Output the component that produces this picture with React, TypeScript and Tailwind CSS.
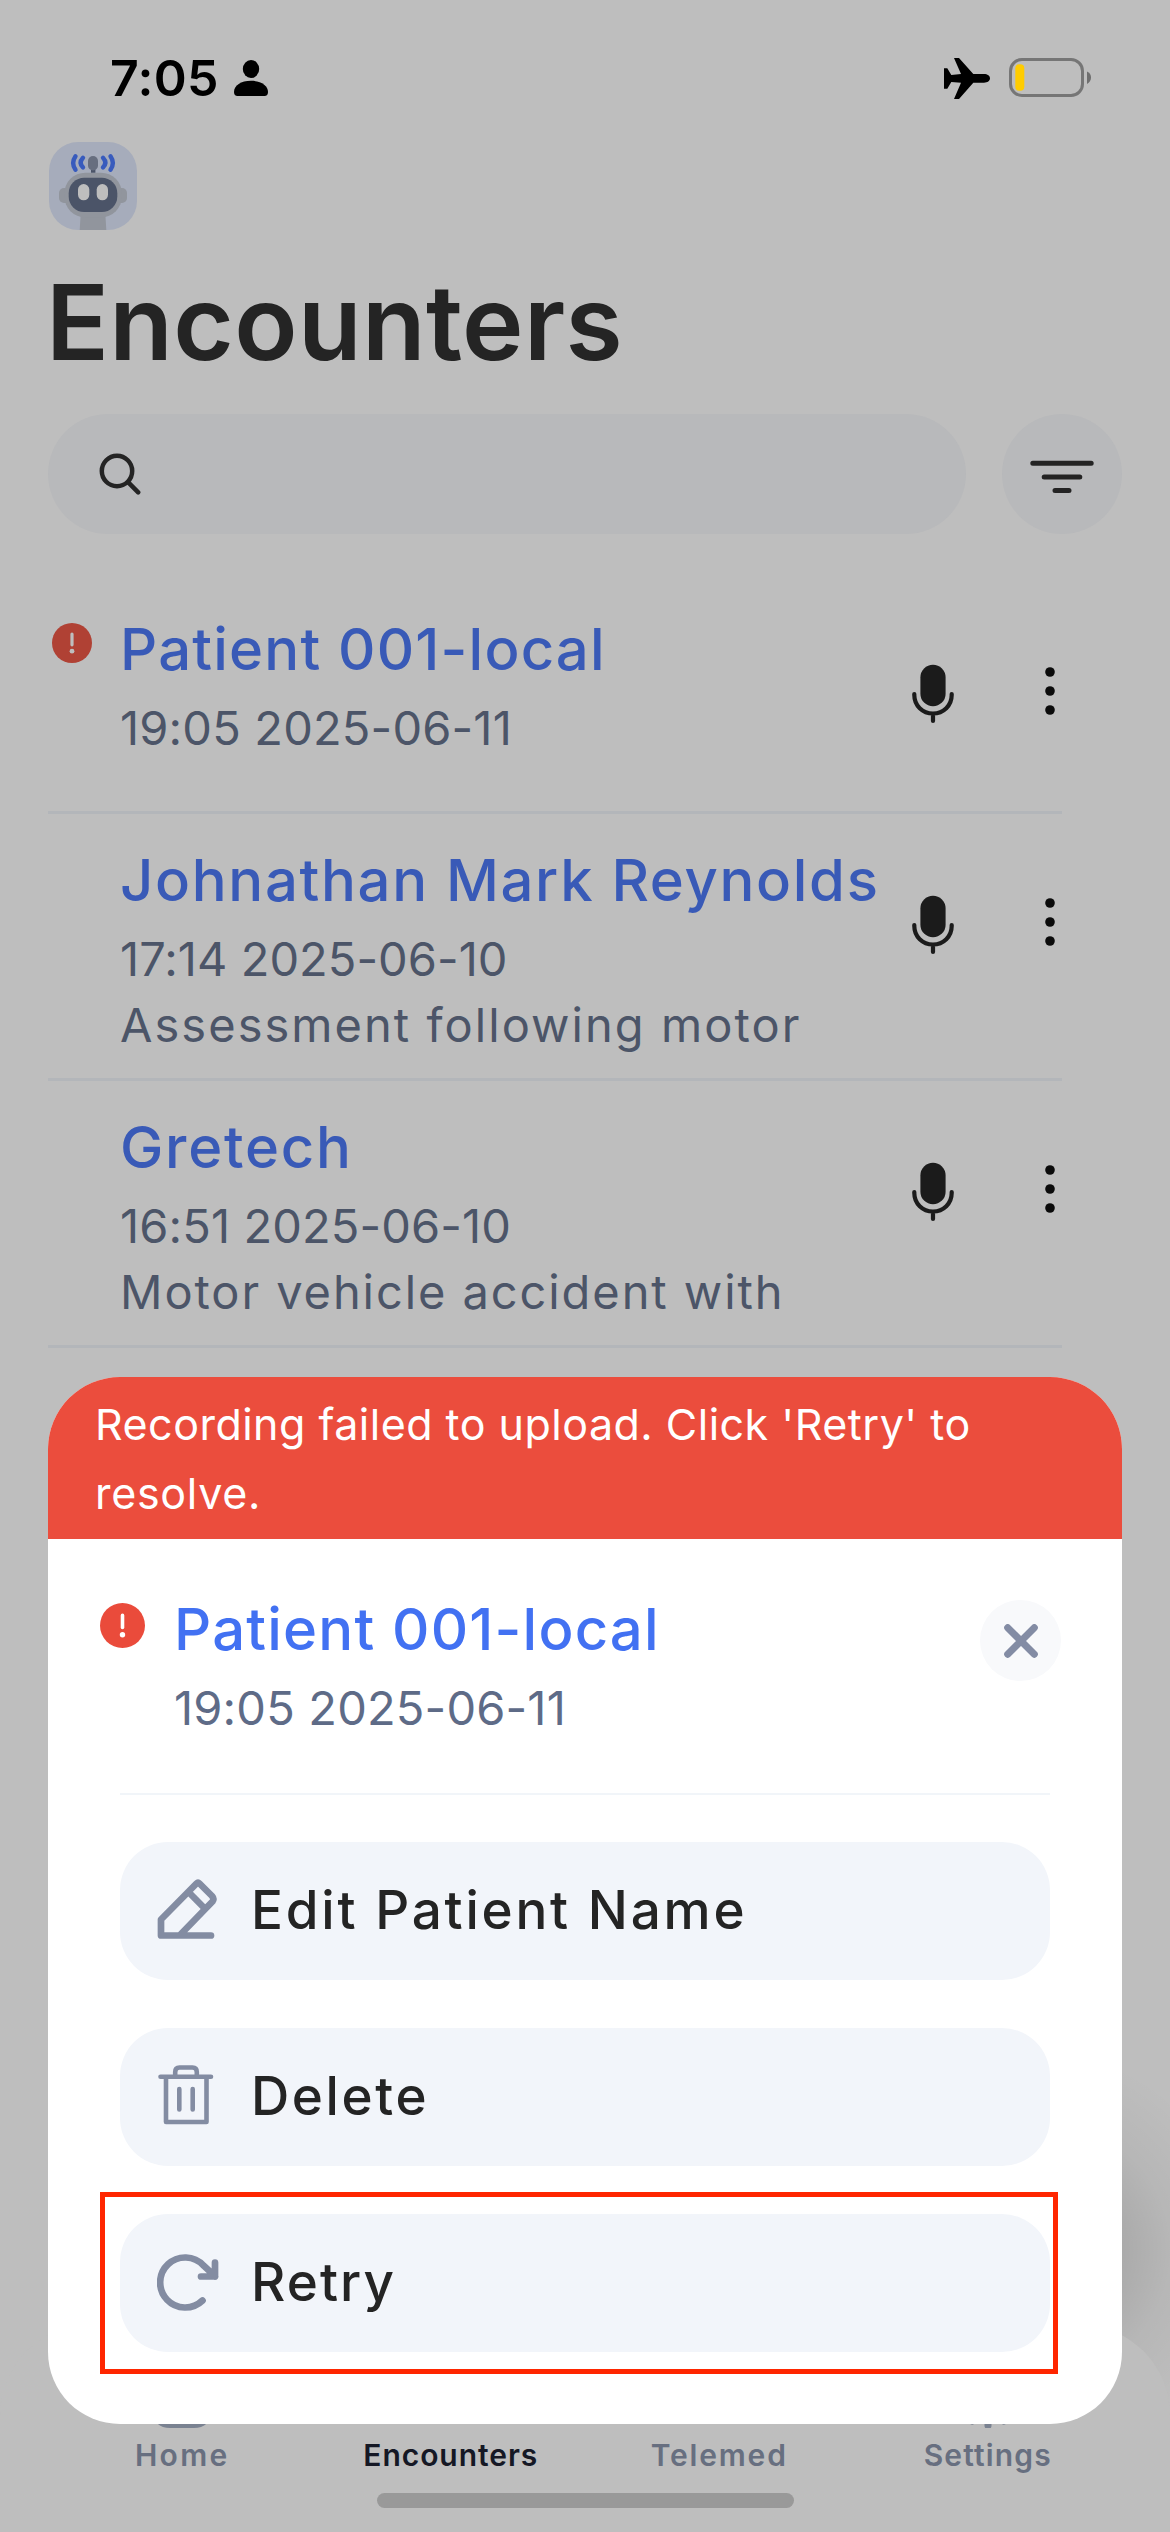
import type { ReactNode } from "react";

type Encounter = {
  name: string;
  nameTracking: string;
  date: string;
  dateTracking: string;
  note?: string;
  noteTracking?: string;
  failed?: boolean;
  height: string;
};

const encounters: Encounter[] = [
  {
    name: "Patient 001-local",
    nameTracking: "tracking-[1.2px]",
    date: "19:05 2025-06-11",
    dateTracking: "tracking-[0.18px]",
    failed: true,
    height: "h-[231px]",
  },
  {
    name: "Johnathan Mark Reynolds",
    nameTracking: "tracking-[1.68px]",
    date: "17:14 2025-06-10",
    dateTracking: "tracking-[0.05px]",
    note: "Assessment following motor",
    noteTracking: "tracking-[2.05px]",
    height: "h-[267px]",
  },
  {
    name: "Gretech",
    nameTracking: "tracking-[1.75px]",
    date: "16:51 2025-06-10",
    dateTracking: "tracking-[0.13px]",
    note: "Motor vehicle accident with",
    noteTracking: "tracking-[1.92px]",
    height: "h-[267px]",
  },
];

function AlertIcon({ className, mark }: { className: string; mark: string }) {
  return (
    <svg viewBox="0 0 40 40" className={className}>
      <circle cx="20" cy="20" r="20" fill="currentColor" />
      <path d="M20 11v10.800" stroke={mark} strokeWidth="3.200" strokeLinecap="round" />
      <circle cx="20" cy="28.200" r="2.400" fill={mark} />
    </svg>
  );
}

function StatusBar() {
  return (
    <div className="flex h-[142px] items-start pt-12 pr-[79px] pl-[110px] text-black">
      <span className="text-[50px] leading-[60px] font-semibold tracking-[0.32px]">7:05</span>
      <svg viewBox="0 0 34 36" className="mt-3 ml-[15px] h-9 w-[34px]" fill="currentColor">
        <ellipse cx="17" cy="9" rx="8.200" ry="9" />
        <path d="M0 32C0 25.500 7 20.800 17 20.800S34 25.500 34 32C34 34.800 32.800 36 30.500 36H3.500C1.200 36 0 34.800 0 32Z" />
      </svg>
      <svg viewBox="0 0 46 41" className="mt-[10px] ml-auto h-[41px] w-[46px]" fill="currentColor">
        <path d="M46 20.300C46 22.800 43.500 24.700 40 24.700H29.300L15 41H10L17 24.700L7.300 24L3.300 30.700H0V10.300H3.300L7.300 17L17 16L10 0H15L29.300 16H40C43.500 16 46 17.800 46 20.300Z" />
      </svg>
      <svg viewBox="0 0 82 39" className="mt-[10px] ml-[19px] h-[39px] w-[82px]">
        <rect x="1.500" y="1.500" width="72" height="36" rx="11.500" fill="none" stroke="#767676" strokeWidth="3" />
        <rect x="6.300" y="6.300" width="9" height="26.500" rx="4" fill="#ffcc00" />
        <path d="M78 13.500C80.500 14.500 82 16.800 82 19.500S80.500 24.800 78 26Z" fill="#6e6e6e" />
      </svg>
    </div>
  );
}

function RobotAvatar() {
  return (
    <svg viewBox="0 0 88 88" className="ml-px h-[88px] w-[88px]">
      <rect width="88" height="88" rx="29" fill="#a6acbb" />
      <path d="M31.700 72H56.300L57.300 88H30.700Z" fill="#91959d" />
      <rect x="10" y="46" width="68" height="15" rx="5" fill="#91959d" />
      <rect x="15.300" y="30.700" width="57.700" height="44.600" rx="21" fill="#91959d" />
      <rect x="19.700" y="35.700" width="48.600" height="34.300" rx="15.500" fill="#4b5468" />
      <rect x="29" y="42" width="11.300" height="16.300" rx="5.600" fill="#bebebe" />
      <rect x="47.700" y="42" width="11.300" height="16.300" rx="5.600" fill="#bebebe" />
      <rect x="42" y="26" width="4.400" height="4.700" fill="#4b5468" />
      <rect x="39" y="14" width="10" height="14.400" rx="5" fill="#676e7f" />
      <g fill="none" stroke="#385bbd" strokeWidth="4.400" strokeLinecap="round">
        <path d="M26.500 14.300Q21.800 21 26.500 27.800" />
        <path d="M34 15.800Q29.300 20.800 34 25.400" />
        <path d="M61.500 14.300Q66.200 21 61.500 27.800" />
        <path d="M54 15.800Q58.700 20.800 54 25.400" />
      </g>
    </svg>
  );
}

function SearchRow() {
  return (
    <div className="mt-8 flex justify-between">
      <div className="flex h-[120px] w-[918px] items-start rounded-full bg-[#b8b9bb]">
        <svg viewBox="0 0 42 42" className="mt-[39px] ml-[51px] h-[42px] w-[42px]" fill="none" stroke="#242424" strokeWidth="4.500" strokeLinecap="round">
          <circle cx="18" cy="18" r="15.200" />
          <path d="M29.300 29.300L39.200 39.300" />
        </svg>
      </div>
      <div className="flex h-[120px] w-[120px] items-center justify-center rounded-full bg-[#b8b9bb]">
        <svg viewBox="0 0 64 34" className="mt-[6px] h-[34px] w-16" stroke="#242424" strokeWidth="5" strokeLinecap="round">
          <path d="M2.800 3.300H61.200M14.200 16.900H49.800M25 30.400H39" />
        </svg>
      </div>
    </div>
  );
}

function EncounterRow({ item }: { item: Encounter }) {
  return (
    <div className={`flex w-[1014px] items-start border-b-[3px] border-[#b3b6ba] ${item.height}`}>
      <div className="w-[72px] pt-10 pl-1">
        {item.failed && <AlertIcon className="h-10 w-10 text-[#b04134]" mark="#bebebe" />}
      </div>
      <div className="flex-1 pt-6 whitespace-nowrap">
        <div className={`text-[58px] leading-[84px] font-medium text-[#395ab7] ${item.nameTracking}`}>{item.name}</div>
        <div className={`text-[47px] leading-[74px] text-[#4c5568] ${item.dateTracking}`}>{item.date}</div>
        {item.note && (
          <div className={`text-[47px] leading-[58px] text-[#4c5568] ${item.noteTracking ?? ""}`}>{item.note}</div>
        )}
      </div>
      <svg viewBox="0 0 42 60" className="mt-[81px] h-[60px] w-[42px]" fill="none" stroke="#1b1b1b" strokeWidth="4.200" strokeLinecap="round">
        <rect x="8.400" y="0.800" width="25.200" height="41.500" rx="12.600" fill="#1b1b1b" stroke="none" />
        <path d="M2.300 30V31C2.300 41.500 10.500 49.500 21 49.500S39.700 41.500 39.700 31V30M21 49.500V57" />
      </svg>
      <svg viewBox="0 0 12 48" className="mt-[84px] mr-[6px] ml-[90px] h-12 w-3" fill="#0b0b0b">
        <circle cx="6" cy="5" r="4.800" />
        <circle cx="6" cy="24" r="4.800" />
        <circle cx="6" cy="43" r="4.800" />
      </svg>
    </div>
  );
}

function TabLabel({ children, className }: { children: ReactNode; className: string }) {
  return <span className={`text-[30px] leading-10 font-semibold ${className}`}>{children}</span>;
}

function TabBar() {
  return (
    <div className="relative mt-auto h-[207px] rounded-t-[90px] bg-[#bebebe] px-12 pt-[43px]">
      <div className="grid grid-cols-4">
        <div className="flex flex-col items-center">
          <svg viewBox="0 0 60 60" className="mb-[7px] h-[60px] w-[60px]" fill="#7a8291">
            <path d="M30 0L60 24V42C60 54 52 60 42 60H18C8 60 0 54 0 42V24Z" />
          </svg>
          <TabLabel className="tracking-[2.3px] text-[#676f80]">Home</TabLabel>
        </div>
        <div className="flex flex-col items-center">
          <div className="mb-[7px] h-[60px]" />
          <TabLabel className="tracking-[0.95px] text-[#151825]">Encounters</TabLabel>
        </div>
        <div className="flex flex-col items-center">
          <div className="mb-[7px] h-[60px]" />
          <TabLabel className="tracking-[1.8px] text-[#676f80]">Telemed</TabLabel>
        </div>
        <div className="flex flex-col items-center">
          <svg viewBox="0 0 60 60" className="mb-[7px] h-[60px] w-[60px]" fill="none" stroke="#7a8291" strokeWidth="7" strokeLinecap="round">
            <circle cx="30" cy="30" r="18" />
            <path d="M30 4V10M30 50V57.500M14 53L17 48M46 53L43 48M4 30H10M50 30H56" />
          </svg>
          <TabLabel className="tracking-[1.15px] text-[#676f80]">Settings</TabLabel>
        </div>
      </div>
      <div className="mx-auto mt-[18px] h-[15px] w-[417px] rounded-full bg-[#999999]" />
    </div>
  );
}

function EditIcon() {
  return (
    <svg viewBox="0 0 62 62" className="-mt-[2px] h-[62px] w-[62px]" fill="none" stroke="#838ca2" strokeWidth="6.700" strokeLinecap="round" strokeLinejoin="round">
      <path d="M54 56.500H4V40.500L39.500 4.500Q41 3 42.500 4.500L55 17Q57.500 19.800 55.500 22.500L23 56M32 13.500L45.800 27.500" />
    </svg>
  );
}

function TrashIcon() {
  return (
    <svg viewBox="0 0 62 62" className="-mt-[4px] h-[62px] w-[62px]" fill="none" stroke="#838ca2" strokeWidth="4.600" strokeLinecap="round" strokeLinejoin="round">
      <path d="M3.500 12.800H54M9 12.800V58H49.500V12.800M18.200 12V8Q18.200 3.500 22.500 3.500H35.500Q39.800 3.500 39.800 8V12M22.300 25V45.500M35.700 25V45.500" />
    </svg>
  );
}

function RetryIcon() {
  return (
    <svg viewBox="0 0 62 62" className="h-[62px] w-[62px]" fill="none" stroke="#838ca2" strokeWidth="6.700" strokeLinecap="round" strokeLinejoin="round">
      <path d="M45.500 48.500A25 25 0 1 1 46.500 13.500Q50.500 17 58 24.500M58 10.500V24.500H44" />
    </svg>
  );
}

function ActionButton({ icon, label, tracking }: { icon: ReactNode; label: string; tracking: string }) {
  return (
    <button className="flex h-[138px] w-full items-center gap-8 rounded-[48px] bg-[#f2f5fa] pl-[37px] text-left">
      {icon}
      <span className={`-mt-[2px] text-[53px] leading-[70px] font-medium text-[#242424] ${tracking}`}>{label}</span>
    </button>
  );
}

function ActionSheet() {
  return (
    <div className="absolute top-[1377px] left-12 h-[1047px] w-[1074px] overflow-hidden rounded-[72px] bg-white">
      <div className="h-[162px] bg-[#eb4d3d] pt-[13px] pl-[47px] text-[43px] leading-[69px] whitespace-nowrap text-white">
        <div className="tracking-[0.49px]">Recording failed to upload. Click 'Retry' to</div>
        <div className="tracking-[0.7px]">resolve.</div>
      </div>
      <div className="flex h-[254px] items-start pt-12 pr-[61px] pl-[52px]">
        <AlertIcon className="mt-4 h-[45px] w-[45px] text-[#ea4b3b]" mark="#ffffff" />
        <div className="ml-[29px] flex-1">
          <div className="text-[58px] leading-[84px] font-medium tracking-[1.2px] text-[#4271f2]">Patient 001-local</div>
          <div className="text-[47px] leading-[74px] tracking-[0.18px] text-[#5e6b87]">19:05 2025-06-11</div>
        </div>
        <button className="mt-[13px] flex h-[81px] w-[81px] items-center justify-center rounded-full bg-[#f8f9fb]">
          <svg viewBox="0 0 34 34" className="h-[34px] w-[34px]" stroke="#838ca4" strokeWidth="7" strokeLinecap="round">
            <path d="M3.700 3.700L30.300 30.300M30.300 3.700L3.700 30.300" />
          </svg>
        </button>
      </div>
      <div className="mx-[72px] h-[2px] bg-[#f1f5f9]" />
      <div className="mx-[72px] mt-[47px] flex flex-col gap-12">
        <ActionButton icon={<EditIcon />} label="Edit Patient Name" tracking="tracking-[2.78px]" />
        <ActionButton icon={<TrashIcon />} label="Delete" tracking="tracking-[2.62px]" />
        <ActionButton icon={<RetryIcon />} label="Retry" tracking="tracking-[2.1px]" />
      </div>
      <div className="absolute top-[815px] left-[52px] h-[182px] w-[958px] border-[5px] border-[#ff2600]" />
    </div>
  );
}

export default function App() {
  return (
    <div className="relative flex h-[2532px] w-[1170px] flex-col overflow-hidden bg-[#bebebe] font-['Inter','Liberation_Sans',sans-serif]">
      <StatusBar />
      <div className="px-12">
        <RobotAvatar />
        <h1 className="mt-8 -ml-[2px] text-[104px] leading-[120px] font-semibold tracking-[0.37px] text-[#242424]">Encounters</h1>
        <SearchRow />
        <div className="mt-[49px]">
          {encounters.map((item) => (
            <EncounterRow key={item.name} item={item} />
          ))}
        </div>
      </div>
      <div className="absolute top-[2050px] left-[840px] h-[400px] w-[400px] rounded-full bg-[radial-gradient(circle,rgba(0,0,0,0.2)_0px,rgba(0,0,0,0.1)_82px,rgba(0,0,0,0.04)_130px,rgba(0,0,0,0)_200px)]" />
      <TabBar />
      <ActionSheet />
    </div>
  );
}
